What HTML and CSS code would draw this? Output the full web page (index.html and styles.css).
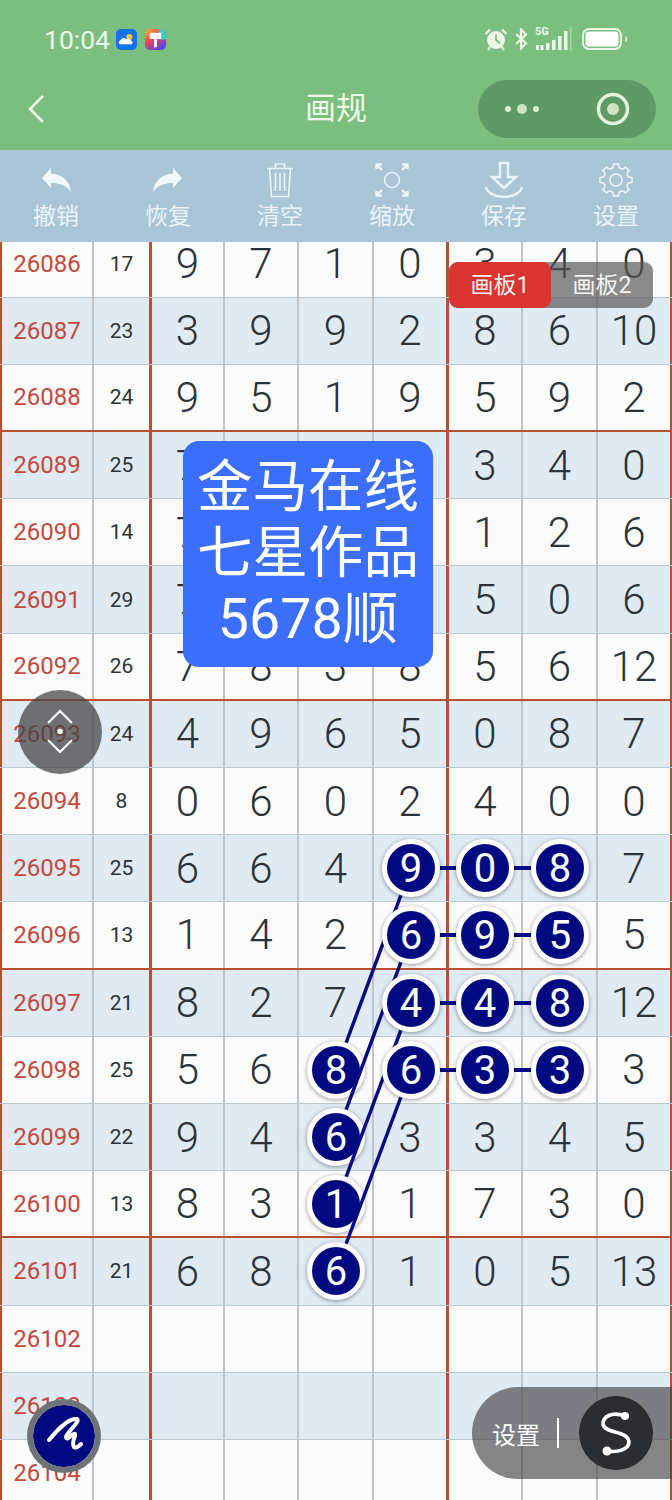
FILE: index.html
```html
<!DOCTYPE html>
<html lang="zh-CN">
<head>
    <meta charset="UTF-8">
    <meta name="viewport" content="width=device-width, initial-scale=1.0">
    <title>画规</title>
    <link rel="stylesheet" href="styles.css">
</head>
<body>
<div class="page">
    <div class="header">
        <div class="status-bar">
            <div class="status-left">
                <span class="time">10:04</span>
                <svg class="app-icon" viewBox="0 0 22 22">
                    <rect width="22" height="22" rx="5" fill="#1273ea"/>
                    <circle cx="14" cy="8.500" r="3.200" fill="#ffc83d"/>
                    <path d="M5 16c-2.500 0-2.800-3.800 0-4.300 .6-2.400 4-3 5.400-.8 1-1 5.600-.6 6 2 1.300 .4 1.200 3.100-.4 3.100z" fill="#fff"/>
                </svg>
                <svg class="app-icon" viewBox="0 0 22 22">
                    <defs>
                        <linearGradient id="paint" x1="0" y1="0" x2=".6" y2="1">
                            <stop offset="0" stop-color="#ffb52e"/>
                            <stop offset=".5" stop-color="#f2425c"/>
                            <stop offset="1" stop-color="#5a45e0"/>
                        </linearGradient>
                    </defs>
                    <rect width="22" height="22" rx="5" fill="url(#paint)"/>
                    <path d="M22 5v6h-7V0h2a5 5 0 0 1 5 5z" fill="#37cfc0"/>
                    <path d="M5 4h12v6.500H12.500V19h-3v-8.500H5z" fill="#fff"/>
                </svg>
            </div>
            <div class="status-right">
                <svg class="st-alarm" viewBox="0 0 24 24">
                    <circle cx="12" cy="13" r="9" fill="#eef8e6"/>
                    <path d="M12 7.500V13l4 3.500" fill="none" stroke="#7abf80" stroke-width="1.800"/>
                    <path d="M1.500 7 6 2.500M22.500 7 18 2.500" stroke="#eef8e6" stroke-width="2.400" fill="none"/>
                    <path d="M6 20l-2 3M18 20l2 3" stroke="#eef8e6" stroke-width="2"/>
                </svg>
                <svg class="st-bt" viewBox="0 0 15 22">
                    <path d="M2 6l10 9.500-5 5V1.500l5 5L2 16" fill="none" stroke="#eef8e6" stroke-width="2.200"/>
                </svg>
                <div class="st-signal">
                    <span class="st-5g">5G</span>
                    <svg viewBox="0 0 38 24">
                        <path d="M1 18h3v5H1zM5.500 18h3v5h-3z" fill="#eef8e6"/>
                        <path d="M11 16h3.500v7H11zM17 13h3.500v10H17zM23 9h3.500v14H23zM29 4h3.500v19H29z" fill="#eef8e6"/>
                        <path d="M35 0h1.500v24H35z" fill="#a8d6a4"/>
                    </svg>
                </div>
                <svg class="st-battery" viewBox="0 0 46 22">
                    <rect x="1" y="1" width="38" height="20" rx="6" fill="none" stroke="#eef8e6" stroke-width="1.800"/>
                    <rect x="3.500" y="3.500" width="33" height="15" rx="3.500" fill="#fff"/>
                    <path d="M43.500 8c2 .5 2 5.500 0 6z" fill="#eef8e6"/>
                </svg>
            </div>
        </div>
        <div class="nav-bar">
            <svg class="back" viewBox="0 0 20 30">
                <path d="M16 2 3 15l13 13" fill="none" stroke="#eef8e6" stroke-width="2.600"/>
            </svg>
            <span class="nav-title">画规</span>
            <div class="capsule">
                <svg class="capsule-dots" viewBox="0 0 36 12">
                    <circle cx="4" cy="6" r="3" fill="#dcefd0"/>
                    <circle cx="18" cy="6" r="5" fill="#cfe3c3"/>
                    <circle cx="32" cy="6" r="3" fill="#dcefd0"/>
                </svg>
                <svg class="capsule-target" viewBox="0 0 34 34">
                    <circle cx="17" cy="17" r="14.500" fill="none" stroke="#e4f4d8" stroke-width="3.500"/>
                    <circle cx="17" cy="17" r="6" fill="#cfe3c3"/>
                </svg>
            </div>
        </div>
    </div>

    <div class="toolbar">
        <div class="tool">
            <svg viewBox="0 0 36 38"><path class="fill" d="M4 18 13 8v5.500C24 14 32 21 33 32c-5-7-11-9-20-9v5z"/></svg>
            <span>撤销</span>
        </div>
        <div class="tool">
            <svg viewBox="0 0 36 38"><path class="fill" d="M32 18 23 8v5.500C12 14 4 21 3 32c5-7 11-9 20-9v5z"/></svg>
            <span>恢复</span>
        </div>
        <div class="tool">
            <svg viewBox="0 0 36 38"><path class="line" d="M5 8.500h26M13.500 8.500V4h9v4.500M7.500 8.500 9.500 36.500h17l2-28M13.500 13v18M18 13v18M22.500 13v18"/></svg>
            <span>清空</span>
        </div>
        <div class="tool">
            <svg viewBox="0 0 36 38"><circle class="line" cx="18" cy="20" r="7.500"/><path class="line wide" d="M2.500 9V4.500h5.500M33.500 9V4.500h-5.500M2.500 31V35.500h5.500M33.500 31V35.500h-5.500M3 5l5 5M33 5l-5 5M3 35l5-5M33 35l-5-5"/></svg>
            <span>缩放</span>
        </div>
        <div class="tool">
            <svg viewBox="0 0 42 38"><path class="line wide" d="M17 3h8v14h8L21 28 9 17h8zM3 27C6 40 36 40 39 27"/></svg>
            <span>保存</span>
        </div>
        <div class="tool">
            <svg viewBox="0 0 36 38">
                <g transform="translate(18 20)">
                    <circle class="line" r="6"/>
                    <circle class="line" r="12.500" stroke-dasharray="3.640 6.180" stroke-dashoffset="-3.100"/>
                    <path id="tooth" class="line" d="M-3.100-12.200-2.400-16H2.400L3.100-12.200"/>
                    <use href="#tooth" transform="rotate(45)"/>
                    <use href="#tooth" transform="rotate(90)"/>
                    <use href="#tooth" transform="rotate(135)"/>
                    <use href="#tooth" transform="rotate(180)"/>
                    <use href="#tooth" transform="rotate(225)"/>
                    <use href="#tooth" transform="rotate(270)"/>
                    <use href="#tooth" transform="rotate(315)"/>
                </g>
            </svg>
            <span>设置</span>
        </div>
    </div>

    <div class="board">
        <div class="rows">
            <div class="row"><div class="no">26086</div><div class="sum">17</div><div>9</div><div>7</div><div>1</div><div class="end">0</div><div>3</div><div>4</div><div class="last">0</div></div>
            <div class="row alt"><div class="no">26087</div><div class="sum">23</div><div>3</div><div>9</div><div>9</div><div class="end">2</div><div>8</div><div>6</div><div class="last">10</div></div>
            <div class="row sep"><div class="no">26088</div><div class="sum">24</div><div>9</div><div>5</div><div>1</div><div class="end">9</div><div>5</div><div>9</div><div class="last">2</div></div>
            <div class="row alt"><div class="no">26089</div><div class="sum">25</div><div>7</div><div></div><div></div><div class="end"></div><div>3</div><div>4</div><div class="last">0</div></div>
            <div class="row"><div class="no">26090</div><div class="sum">14</div><div>7</div><div></div><div></div><div class="end"></div><div>1</div><div>2</div><div class="last">6</div></div>
            <div class="row alt"><div class="no">26091</div><div class="sum">29</div><div>7</div><div></div><div></div><div class="end"></div><div>5</div><div>0</div><div class="last">6</div></div>
            <div class="row sep"><div class="no">26092</div><div class="sum">26</div><div>7</div><div>8</div><div>3</div><div class="end">8</div><div>5</div><div>6</div><div class="last">12</div></div>
            <div class="row alt"><div class="no">26093</div><div class="sum">24</div><div>4</div><div>9</div><div>6</div><div class="end">5</div><div>0</div><div>8</div><div class="last">7</div></div>
            <div class="row"><div class="no">26094</div><div class="sum">8</div><div>0</div><div>6</div><div>0</div><div class="end">2</div><div>4</div><div>0</div><div class="last">0</div></div>
            <div class="row alt"><div class="no">26095</div><div class="sum">25</div><div>6</div><div>6</div><div>4</div><div class="end"></div><div></div><div></div><div class="last">7</div></div>
            <div class="row sep"><div class="no">26096</div><div class="sum">13</div><div>1</div><div>4</div><div>2</div><div class="end"></div><div></div><div></div><div class="last">5</div></div>
            <div class="row alt"><div class="no">26097</div><div class="sum">21</div><div>8</div><div>2</div><div>7</div><div class="end"></div><div></div><div></div><div class="last">12</div></div>
            <div class="row"><div class="no">26098</div><div class="sum">25</div><div>5</div><div>6</div><div></div><div class="end"></div><div></div><div></div><div class="last">3</div></div>
            <div class="row alt"><div class="no">26099</div><div class="sum">22</div><div>9</div><div>4</div><div></div><div class="end">3</div><div>3</div><div>4</div><div class="last">5</div></div>
            <div class="row sep"><div class="no">26100</div><div class="sum">13</div><div>8</div><div>3</div><div></div><div class="end">1</div><div>7</div><div>3</div><div class="last">0</div></div>
            <div class="row alt"><div class="no">26101</div><div class="sum">21</div><div>6</div><div>8</div><div></div><div class="end">1</div><div>0</div><div>5</div><div class="last">13</div></div>
            <div class="row"><div class="no">26102</div><div class="sum"></div><div></div><div></div><div></div><div class="end"></div><div></div><div></div><div class="last"></div></div>
            <div class="row alt"><div class="no">26103</div><div class="sum"></div><div></div><div></div><div></div><div class="end"></div><div></div><div></div><div class="last"></div></div>
            <div class="row"><div class="no">26104</div><div class="sum"></div><div></div><div></div><div></div><div class="end"></div><div></div><div></div><div class="last"></div></div>
        </div>
    </div>

    <!-- 连线和号码球，坐标就是页面坐标 -->
    <svg class="chart" viewBox="0 0 672 1500">
        <path class="link" d="M411 868H560M411 935H560M411 1003H560M411 1070H560"/>
        <path class="slant" d="M411 868 336 1070"/>
        <g class="ball"><circle cx="336" cy="1070" r="26.500"/><text x="336" y="1084">8</text></g>
        <path class="slant" d="M411 935 336 1137"/>
        <g class="ball"><circle cx="336" cy="1137" r="26.500"/><text x="336" y="1151">6</text></g>
        <path class="slant" d="M411 1003 336 1204"/>
        <g class="ball"><circle cx="336" cy="1204" r="26.500"/><text x="336" y="1218">1</text></g>
        <path class="slant" d="M411 1070 336 1271"/>
        <g class="ball"><circle cx="336" cy="1271" r="26.500"/><text x="336" y="1285">6</text></g>

        <g class="ball"><circle cx="411" cy="868" r="26.500"/><text x="411" y="882">9</text></g>
        <g class="ball"><circle cx="485" cy="868" r="26.500"/><text x="485" y="882">0</text></g>
        <g class="ball"><circle cx="560" cy="868" r="26.500"/><text x="560" y="882">8</text></g>
        <g class="ball"><circle cx="411" cy="935" r="26.500"/><text x="411" y="949">6</text></g>
        <g class="ball"><circle cx="485" cy="935" r="26.500"/><text x="485" y="949">9</text></g>
        <g class="ball"><circle cx="560" cy="935" r="26.500"/><text x="560" y="949">5</text></g>
        <g class="ball"><circle cx="411" cy="1003" r="26.500"/><text x="411" y="1017">4</text></g>
        <g class="ball"><circle cx="485" cy="1003" r="26.500"/><text x="485" y="1017">4</text></g>
        <g class="ball"><circle cx="560" cy="1003" r="26.500"/><text x="560" y="1017">8</text></g>
        <g class="ball"><circle cx="411" cy="1070" r="26.500"/><text x="411" y="1084">6</text></g>
        <g class="ball"><circle cx="485" cy="1070" r="26.500"/><text x="485" y="1084">3</text></g>
        <g class="ball"><circle cx="560" cy="1070" r="26.500"/><text x="560" y="1084">3</text></g>
    </svg>

    <div class="tabs">
        <span class="tab active">画板1</span>
        <span class="tab">画板2</span>
    </div>

    <div class="promo">
        <div>金马在线</div>
        <div>七星作品</div>
        <div>5678顺</div>
    </div>

    <div class="fab-move">
        <svg viewBox="0 0 84 84">
            <path d="M30 33 42 21 54 33M30 50 42 62 54 50" fill="none" stroke="#fff" stroke-width="2.200"/>
            <circle cx="42" cy="41.500" r="2.800" fill="#fff"/>
        </svg>
    </div>

    <div class="fab-pen">
        <svg viewBox="0 0 62 62">
            <path d="M16 35C24 25 36 13 44 14 48 16 34 27 33 32 34 37 40 27 42 29 43 32 38 36 41 42 44 44 47 40 48 39" fill="none" stroke="#fff" stroke-width="4" stroke-linecap="round" stroke-linejoin="round"/>
        </svg>
    </div>

    <div class="fab-set">
        <span class="fab-set-label">设置</span>
        <span class="fab-set-line"></span>
        <div class="fab-set-round">
            <svg viewBox="0 0 74 74">
                <path d="M46 20C32 15 24 21 24 28 25 38 49 34 50 46 50 53 39 57 28 55" fill="none" stroke="#fff" stroke-width="3.600"/>
                <circle cx="46" cy="20" r="4" fill="#fff"/>
                <circle cx="28" cy="55" r="4.500" fill="#fff"/>
            </svg>
        </div>
    </div>
</div>
</body>
</html>
```

FILE: styles.css
```css
* {
    margin: 0;
    padding: 0;
    box-sizing: border-box;
}

body {
    font-family: 'Roboto', 'Noto Sans CJK SC', sans-serif;
    background: #fbfbfb;
}

.page {
    position: relative;
    width: 672px;
    height: 1500px;
    overflow: hidden;
}

/* 顶部绿色区域 */
.header {
    height: 150px;
    background: #7abf80;
    color: #eef8e6;
}

.status-bar {
    height: 78px;
    padding: 0 44px;
    display: flex;
    justify-content: space-between;
    align-items: center;
}

.status-left {
    display: flex;
    align-items: center;
}

.time {
    font-size: 26.500px;
    width: 72px;
}

.app-icon {
    width: 21px;
    height: 21px;
    margin-right: 8px;
}

.status-right {
    display: flex;
    align-items: center;
}

.st-alarm {
    width: 24px;
    height: 24px;
    margin-right: 6px;
}

.st-bt {
    width: 15px;
    height: 22px;
    margin-right: 6px;
}

.st-signal {
    position: relative;
    width: 38px;
    height: 24px;
    margin-right: 9px;
}

.st-signal svg {
    position: absolute;
    left: 0;
    bottom: 0;
    width: 38px;
    height: 24px;
}

.st-5g {
    position: absolute;
    left: 0;
    top: -2px;
    font-size: 11px;
    font-weight: 700;
}

.st-battery {
    width: 46px;
    height: 22px;
}

.nav-bar {
    height: 58px;
    padding: 0 16px;
    margin-top: 2px;
    display: grid;
    grid-template-columns: 1fr auto 1fr;
    align-items: center;
}

.back {
    width: 20px;
    height: 30px;
    margin-left: 11px;
}

.nav-title {
    font-size: 31px;
    line-height: 54px;
}

.capsule {
    justify-self: end;
    width: 178px;
    height: 58px;
    padding: 0 26px;
    border-radius: 29px;
    background: #5e9a66;
    display: flex;
    justify-content: space-between;
    align-items: center;
}

.capsule-dots {
    width: 36px;
    height: 12px;
}

.capsule-target {
    width: 34px;
    height: 34px;
}

/* 工具栏 */
.toolbar {
    height: 92px;
    background: #a9c6d6;
    display: grid;
    grid-template-columns: repeat(6, 1fr);
    position: relative;
    z-index: 1;
}

.tool {
    padding-top: 10px;
    display: flex;
    flex-direction: column;
    align-items: center;
    color: #eaf3f7;
    font-size: 23px;
    line-height: 32px;
}

.tool svg {
    height: 38px;
    width: 42px;
}

.tool span {
    margin-top: 3px;
}

.tool .fill {
    fill: #f1f7fa;
}

.tool .line {
    fill: none;
    stroke: #eaf3f7;
    stroke-width: 1.600;
}

.tool .wide {
    stroke-width: 2.400;
}

/* 表格 */
.board {
    height: 1258px;
    overflow: hidden;
}

.rows {
    margin-top: -11.500px;
}

.row {
    height: 67.200px;
    display: grid;
    grid-template-columns: 94px 58px 73px 74px 75px 75px 74px 75px 74px;
    border-bottom: 1px solid #bcc8cf;
    background: #fbfbfb;
}

.row.alt {
    background: #dfeaf3;
}

.row.sep {
    border-bottom: 2px solid #b9502f;
}

.row > div {
    display: flex;
    justify-content: center;
    align-items: center;
    border-right: 2px solid #bfc4c8;
    font-size: 42px;
    font-weight: 350;
    color: #2b3338;
}

.row > .no {
    border-left: 2px solid #b9502f;
    font-size: 24px;
    font-weight: 400;
    color: #c4493a;
}

.row > .sum {
    border-right: 3.500px solid #b9502f;
    font-size: 21px;
    font-weight: 400;
}

.row > .end {
    border-right: 3px solid #b9502f;
}

.row > .last {
    border-right: 2px solid #b9502f;
}

/* 连线图 */
.chart {
    position: absolute;
    top: 0;
    left: 0;
    width: 672px;
    height: 1500px;
    pointer-events: none;
}

.link {
    fill: none;
    stroke: #0a0a82;
    stroke-width: 4px;
}

.slant {
    fill: none;
    stroke: #0a0a82;
    stroke-width: 3.500px;
}

.ball circle {
    fill: #000a80;
    stroke: #fff;
    stroke-width: 5px;
    filter: drop-shadow(0 1px 2px rgba(0,0,0,0.4));
}

.ball text {
    font-family: 'Roboto', sans-serif;
    font-size: 40px;
    font-weight: 400;
    fill: #fff;
    text-anchor: middle;
}

/* 浮层 */
.tabs {
    position: absolute;
    top: 262px;
    left: 449px;
    width: 204px;
    height: 46px;
    display: flex;
    border-radius: 9px;
    background: rgba(85,85,85,0.68);
    color: #f3f3f3;
    font-size: 23px;
}

.tab {
    flex: 1;
    padding-bottom: 4px;
    display: flex;
    justify-content: center;
    align-items: center;
}

.tab.active {
    background: #d9342f;
    border-radius: 9px;
}

.promo {
    position: absolute;
    top: 441px;
    left: 183px;
    width: 250px;
    height: 226px;
    padding-top: 14px;
    border-radius: 16px;
    background: #3a6efb;
    color: #fff;
    font-size: 55.500px;
    line-height: 66px;
    text-align: center;
}

.fab-move {
    position: absolute;
    top: 690px;
    left: 18px;
    width: 84px;
    height: 84px;
    border-radius: 50%;
    background: rgba(65,65,65,0.72);
}

.fab-pen {
    position: absolute;
    top: 1399px;
    left: 27px;
    width: 74px;
    height: 74px;
    padding: 6px;
    border-radius: 50%;
    background: #000a80;
    background-clip: content-box;
    box-shadow: inset 0 0 0 6px #6f7377;
}

.fab-pen svg {
    display: block;
}

.fab-set {
    position: absolute;
    top: 1387px;
    left: 472px;
    width: 200px;
    height: 92px;
    padding-left: 20px;
    border-radius: 46px 0 0 46px;
    background: rgba(60,60,60,0.62);
    display: flex;
    align-items: center;
    color: #fff;
    font-size: 24px;
}

.fab-set-line {
    width: 2px;
    height: 30px;
    margin-left: 17px;
    background: #fff;
}

.fab-set-round {
    width: 74px;
    height: 74px;
    margin-left: 20px;
    border-radius: 50%;
    background: #2b2e30;
}
```
